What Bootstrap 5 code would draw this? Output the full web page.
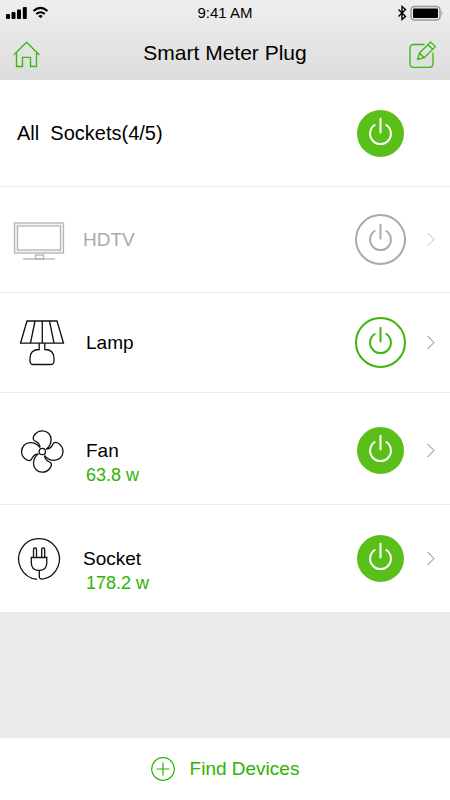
<!DOCTYPE html>
<html lang="en">
<head>
<meta charset="utf-8">
<meta name="viewport" content="width=device-width, initial-scale=1">
<title>Smart Meter Plug</title>
<link href="https://cdn.jsdelivr.net/npm/bootstrap@5.3.0/dist/css/bootstrap.min.css" rel="stylesheet">
<script src="https://cdn.jsdelivr.net/npm/bootstrap@5.3.0/dist/js/bootstrap.bundle.min.js" defer></script>
<style>
body { font-family: "Liberation Sans", Arial, sans-serif; background: #ebebeb; color: #000; }
svg { display: block; fill: none; flex: none; }
.top-area { background: linear-gradient(#efefef, #dcdcdc); }
.status-bar { height: 25px; padding: 0 6px; }
.status-time { font-size: 15px; line-height: 24px; }
.title-bar { height: 55px; padding: 0 13px; }
.page-title { font-size: 21px; line-height: 24px; }
.green-icon { stroke: #3cb80c; padding-top: 4px; }
.device { min-height: 100px; padding: 0 15px 0 13px; border-bottom: 1px solid #ececec; background: #fff; }
.device.all-row { min-height: 107px; padding-left: 17px; padding-right: 44px; }
.device.tall { min-height: 106px; }
.device.fan-row { min-height: 112px; padding-top: 4px; }
.device.last { min-height: 107px; border-bottom: 0; }
.all-label { font-size: 20px; line-height: 24px; }
.device-text { padding-left: 21px; }
.device-text.near { padding-left: 18px; }
.device-text.metered { padding-top: 24px; }
.device-name { font-size: 19px; line-height: 24px; }
.usage { font-size: 18px; line-height: 24px; color: #2db300; }
.near .usage { padding-left: 3px; }
.off-text { color: #aaa; }
.dev-icon { stroke: #111; stroke-width: 1.3; }
.dev-icon.off-icon { stroke: #b4b4b4; }
.power-btn { border: 0; padding: 0; background: none; border-radius: 50%; stroke-width: 2; }
.power-on { stroke: #fff; }
.power-on .disc { fill: #5bbf19; stroke: none; }
.power-ready { stroke: #3fb409; }
.power-off { stroke: #aaa; }
.chevron-link { margin-left: 20px; stroke: #777; }
.chevron-link.dim { stroke: #bbb; }
.find-bar { min-height: 62px; background: #fff; }
.find-btn { border: 0; padding: 0; background: none; gap: 15px; font-size: 19px; line-height: 24px; color: #2db300; }
</style>
</head>
<body>
<svg width="0" height="0" class="position-absolute" aria-hidden="true">
  <defs>
    <g id="power"><path d="M19.7 17a10.400 10.400 0 1 0 11.600 0M25.500 10.800V24.500" stroke-linecap="round"/></g>
    <path id="chev" d="M1.500 1l6.500 6.500L1.500 14"/>
    <path id="blade" d="M-2.300-4.500C-3-9.500-5.500-9.300-8-11C-9.800-12.500-9-15-7.500-17C-5-20.200-2-20.700 0-20.700C5-20.700 8.800-17 8.800-12C8.800-8 7-4.500 3.800-2.200"/>
  </defs>
</svg>
<div class="d-flex flex-column min-vh-100">
  <header class="top-area">
    <div class="status-bar row g-0 align-items-center">
      <div class="col">
        <svg width="44" height="14" viewBox="0 0 44 14" role="img" aria-label="Signal and Wi-Fi">
          <g fill="#000"><rect y="8" width="4" height="5" rx="1"/><rect x="5.500" y="6" width="4" height="7" rx="1"/><rect x="11" y="3.500" width="4" height="9.500" rx="1"/><rect x="16.800" y="1" width="4" height="12" rx="1"/><path d="M34.500 12.300l-2.300-2.300q2.300-2 4.600 0z"/></g>
          <path d="M27.500 5q7-6.200 14 0M30.200 8.100q4.300-3.600 8.600 0" stroke="#000" stroke-width="2"/>
        </svg>
      </div>
      <div class="col-auto status-time">9:41 AM</div>
      <div class="col">
        <svg class="ms-auto" width="46" height="16" viewBox="0 0 46 16" role="img" aria-label="Bluetooth and battery">
          <path d="M.500 4.500l7 7L4 14.500V1.500l3.500 3-7 7" stroke="#000" stroke-width="1.400"/>
          <rect x="13" y="1.500" width="29" height="13.500" rx="3.500" stroke="#999" stroke-width="1.500"/>
          <rect x="15" y="3.500" width="25" height="9.500" rx="1" fill="#000"/>
          <path d="M43.500 5.500q2 2.700 0 5.400z" fill="#999"/>
        </svg>
      </div>
    </div>
    <div class="title-bar row g-0 align-items-center">
      <div class="col d-flex">
        <a href="#" class="green-icon" aria-label="Home">
          <svg width="28" height="28" viewBox="0 0 28 28" stroke-width="1.300"><path d="M.800 14L13.600 1.200 26.400 14M3.500 12v13.500h6v-9.200h8v9.200h6V12"/></svg>
        </a>
      </div>
      <h1 class="col-auto page-title fw-normal mb-0">Smart Meter Plug</h1>
      <div class="col d-flex justify-content-end">
        <a href="#" class="green-icon" aria-label="Edit">
          <svg width="28" height="28" viewBox="0 0 28 28" stroke-width="1.300" stroke-linejoin="round"><path d="M15.500 3.500H4.500Q1 3.500 1 7v15.500Q1 26.300 4.500 26.300h16q3.500 0 3.500-3.800V11.500M8.500 18.500l2-6.500L21.700 1l4.700 4.600L15.200 16.700zM10.500 12l4.700 4.700M19 3.700l4.700 4.600"/></svg>
        </a>
      </div>
    </div>
  </header>

  <main class="flex-grow-1">
    <ul class="list-unstyled mb-0">
      <li class="device all-row d-flex align-items-center">
        <span class="all-label flex-grow-1">All&nbsp; Sockets(4/5)</span>
        <button type="button" class="power-btn power-on" aria-label="Toggle all sockets"><svg width="51" height="51"><circle class="disc" cx="25.500" cy="25.500" r="23.500"/><use href="#power"/></svg></button>
      </li>
      <li class="device tall d-flex align-items-center">
        <svg class="dev-icon off-icon" width="52" height="52" aria-hidden="true"><rect x="1.500" y="9" width="49" height="30" fill="#f3f3f3"/><rect x="4.500" y="12" width="43" height="24" fill="#fff"/><rect x="22.500" y="41" width="8" height="4"/><path d="M10 45h32"/></svg>
        <div class="device-text near flex-grow-1"><div class="device-name off-text">HDTV</div></div>
        <button type="button" class="power-btn power-off" aria-label="Toggle HDTV"><svg width="51" height="51"><circle cx="25.500" cy="25.500" r="24.500"/><use href="#power"/></svg></button>
        <a href="#" class="chevron-link dim" aria-label="HDTV details"><svg width="9" height="15"><use href="#chev"/></svg></a>
      </li>
      <li class="device d-flex align-items-center">
        <svg class="dev-icon" width="52" height="52" aria-hidden="true"><path d="M14 4h30l6.500 22.200H7.500zM22 4l-4.500 22M29.300 4v22M36.500 4L41 26M26.200 26v6.500q-9.200 0-9.200 9v2.500q0 3.500 3.500 3.500h17q3.500 0 3.500-3.500v-2.500q0-9-9.200-9V26"/></svg>
        <div class="device-text flex-grow-1"><div class="device-name">Lamp</div></div>
        <button type="button" class="power-btn power-ready" aria-label="Toggle Lamp"><svg width="51" height="51"><circle cx="25.500" cy="25.500" r="24.500"/><use href="#power"/></svg></button>
        <a href="#" class="chevron-link" aria-label="Lamp details"><svg width="9" height="15"><use href="#chev"/></svg></a>
      </li>
      <li class="device fan-row d-flex align-items-center">
        <svg class="dev-icon" width="52" height="52" aria-hidden="true"><g transform="translate(29.300 26.500)"><circle r="3.200"/><use href="#blade"/><use href="#blade" transform="rotate(90)"/><use href="#blade" transform="rotate(180)"/><use href="#blade" transform="rotate(270)"/></g></svg>
        <div class="device-text metered flex-grow-1"><div class="device-name">Fan</div><div class="usage">63.8 w</div></div>
        <button type="button" class="power-btn power-on" aria-label="Toggle Fan"><svg width="51" height="51"><circle class="disc" cx="25.500" cy="25.500" r="23.500"/><use href="#power"/></svg></button>
        <a href="#" class="chevron-link" aria-label="Fan details"><svg width="9" height="15"><use href="#chev"/></svg></a>
      </li>
      <li class="device last d-flex align-items-center">
        <svg class="dev-icon" width="52" height="52" aria-hidden="true"><path d="M24 46.300A20.400 20.400 0 1 1 29.500 46.100Q26.300 46.300 26.300 43.500V37.500M18.300 24.500h15.500v5q0 8-7.700 8t-7.800-8zM20.500 24.500v-8q0-1.500 1.500-1.500t1.500 1.500v8M28.700 24.500v-8q0-1.500 1.500-1.500t1.500 1.500v8"/></svg>
        <div class="device-text near metered flex-grow-1"><div class="device-name">Socket</div><div class="usage">178.2 w</div></div>
        <button type="button" class="power-btn power-on" aria-label="Toggle Socket"><svg width="51" height="51"><circle class="disc" cx="25.500" cy="25.500" r="23.500"/><use href="#power"/></svg></button>
        <a href="#" class="chevron-link" aria-label="Socket details"><svg width="9" height="15"><use href="#chev"/></svg></a>
      </li>
    </ul>
  </main>

  <footer class="find-bar d-flex align-items-center justify-content-center">
    <button type="button" class="find-btn d-flex align-items-center">
      <svg width="24" height="24" stroke="#2db300" stroke-width="1.200" aria-hidden="true"><circle cx="12" cy="12" r="11.300"/><path d="M12 5.500v13M5.500 12h13"/></svg>
      Find Devices
    </button>
  </footer>
</div>
</body>
</html>
